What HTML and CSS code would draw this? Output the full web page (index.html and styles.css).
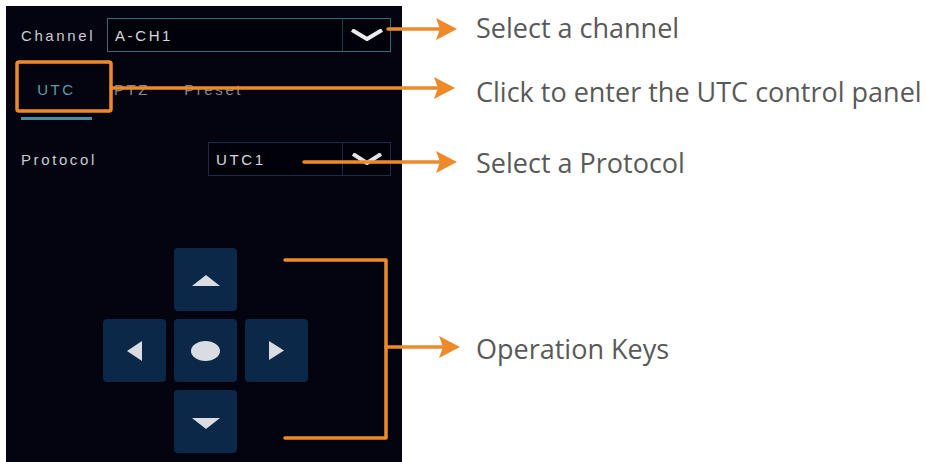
FILE: index.html
```html
<!DOCTYPE html>
<html lang="en">
<head>
    <meta charset="UTF-8">
    <meta name="viewport" content="width=device-width, initial-scale=1.0">
    <title>UTC control</title>
    <link rel="stylesheet" href="styles.css">
</head>
<body>
    <div id="figure">
        <div id="panel">
            <div class="field">
                <span class="field-label">Channel</span>
                <div class="select select-active">
                    <span class="select-value">A-CH1</span>
                    <span class="select-arrow">
                        <svg width="32" height="12" viewBox="0 0 32 12"><path d="M1 1 L16 10 L31 1" fill="none" stroke="#e9ebee" stroke-width="4" stroke-linejoin="round"/></svg>
                    </span>
                </div>
            </div>

            <div id="tabs">
                <span class="tab active">UTC</span>
                <span class="tab">PTZ</span>
                <span class="tab">Preset</span>
            </div>

            <div class="field field-protocol">
                <span class="field-label label-wide">Protocol</span>
                <div class="select">
                    <span class="select-value">UTC1</span>
                    <span class="select-arrow">
                        <svg width="30" height="12" viewBox="0 0 30 12"><path d="M1 1 L15 10 L29 1" fill="none" stroke="#e2e4e8" stroke-width="4" stroke-linejoin="round"/></svg>
                    </span>
                </div>
            </div>

            <div id="keypad">
                <button class="key key-up">
                    <svg width="28" height="11" viewBox="0 0 28 11"><polygon points="14,0 28,11 0,11" fill="#d9dde2"/></svg>
                </button>
                <button class="key key-left">
                    <svg width="15" height="20" viewBox="0 0 15 20"><polygon points="0,10 15,0 15,20" fill="#d9dde2"/></svg>
                </button>
                <button class="key key-center">
                    <svg width="29" height="20" viewBox="0 0 29 20"><ellipse cx="14.5" cy="10" rx="14.5" ry="10" fill="#d9dde2"/></svg>
                </button>
                <button class="key key-right">
                    <svg width="15" height="19" viewBox="0 0 15 19"><polygon points="15,9.5 0,0 0,19" fill="#d9dde2"/></svg>
                </button>
                <button class="key key-down">
                    <svg width="28" height="11" viewBox="0 0 28 11"><polygon points="0,0 28,0 14,11" fill="#d9dde2"/></svg>
                </button>
            </div>
        </div>

        <div id="notes">
            <p class="note note-channel">Select a channel</p>
            <p class="note note-utc">Click to enter the UTC control panel</p>
            <p class="note note-protocol">Select a Protocol</p>
            <p class="note note-keys">Operation Keys</p>
        </div>

        <!-- callout lines drawn over the screenshot -->
        <svg id="callouts" width="926" height="462" viewBox="0 0 926 462">
            <g stroke="#ef8a2a" stroke-width="3.5" fill="none" stroke-linecap="round" stroke-linejoin="round">
                <line x1="388" y1="29" x2="440" y2="29"/>
                <rect x="17" y="62" width="94" height="49" rx="2"/>
                <line x1="111" y1="88" x2="438" y2="88"/>
                <line x1="304" y1="162" x2="440" y2="162"/>
                <polyline points="285,260 386,260 386,438 285,438"/>
                <line x1="386" y1="347" x2="443" y2="347"/>
            </g>
            <g fill="#ef8a2a">
                <polygon points="436,18 457,29 436,40 440,29"/>
                <polygon points="434,77 455,88 434,99 438,88"/>
                <polygon points="436,151 457,162 436,173 440,162"/>
                <polygon points="439,336 460,347 439,358 443,347"/>
            </g>
        </svg>
    </div>
</body>
</html>
```

FILE: styles.css
```css
body {
    margin: 0;
    background: #ffffff;
    overflow: hidden;
}
#figure {
    position: relative;
    display: flex;
    width: 926px;
    height: 462px;
}
#panel {
    box-sizing: border-box;
    width: 396px;
    height: 456px;
    margin: 6px 0 0 6px;
    padding: 12px 11px 0 15px;
    background-color: #03040f;
    font-family: "Liberation Sans", Arial, sans-serif;
    font-size: 15px;
    letter-spacing: 2.6px;
    color: #c9ccd2;
}
.field {
    display: flex;
    align-items: center;
    height: 34px;
}
.field-label {
    width: 86px;
    flex-shrink: 0;
}
.label-wide {
    width: 187px;
}
.select {
    flex: 1;
    display: flex;
    align-items: stretch;
    height: 34px;
    box-sizing: border-box;
    border: 1px solid #1b2b4c;
    background-color: #010209;
}
.select-active {
    border-color: #2d6d7d;
}
.select-value {
    flex: 1;
    display: flex;
    align-items: center;
    padding-left: 7px;
    color: #d6d8dc;
}
.select-arrow {
    width: 47px;
    display: flex;
    align-items: center;
    justify-content: center;
    border-left: 1px solid #1b2b4c;
}
.select-active .select-arrow {
    border-left-color: #1c3a48;
}
#tabs {
    display: flex;
    margin-top: 20px;
}
.tab {
    line-height: 36px;
    padding-bottom: 9px;
    border-bottom: 3px solid transparent;
    color: #878a94;
}
.tab.active {
    width: 71px;
    text-align: center;
    color: #5a9fa8;
    border-bottom-color: #4b8ea0;
}
.tab:nth-child(2) {
    margin-left: 22px;
}
.tab:nth-child(3) {
    margin-left: 34px;
}
.field-protocol {
    margin-top: 22px;
}
#keypad {
    display: grid;
    grid-template-columns: repeat(3, 63px);
    grid-template-rows: repeat(3, 63px);
    gap: 8px;
    margin: 72px 0 0 82px;
}
.key {
    display: flex;
    align-items: center;
    justify-content: center;
    padding: 0;
    border: none;
    border-radius: 4px;
    background-color: #0b2849;
}
.key-up { grid-column: 2; grid-row: 1; }
.key-left { grid-column: 1; grid-row: 2; }
.key-center { grid-column: 2; grid-row: 2; }
.key-right { grid-column: 3; grid-row: 2; }
.key-down { grid-column: 2; grid-row: 3; }
.key-up svg { margin-top: 2px; }
.key-down svg { margin-top: 4px; }
#notes {
    margin-left: 74px;
    padding-top: 10px;
    font-family: "Open Sans", sans-serif;
    font-size: 27px;
    color: #595959;
}
.note {
    margin: 0;
    line-height: 36px;
    white-space: nowrap;
}
.note-utc { margin-top: 28px; }
.note-protocol { margin-top: 35px; }
.note-keys { margin-top: 150px; }
#callouts {
    position: absolute;
    left: 0;
    top: 0;
    pointer-events: none;
}
```
